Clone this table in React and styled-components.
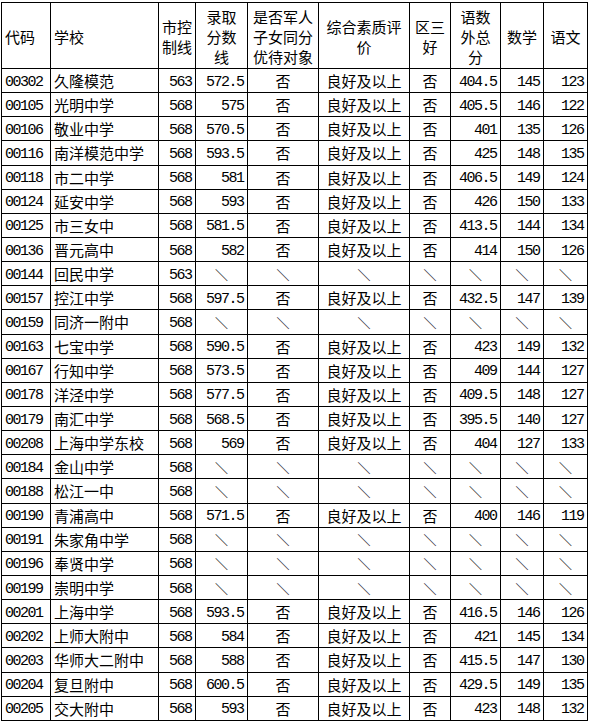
import React from 'react';
import styled, { createGlobalStyle } from 'styled-components';

const GlobalStyle = createGlobalStyle`
    html, body {
        margin: 0;
        padding: 0;
        background: #fff;
    }
`;

const Wrapper = styled.div`
    padding: 2px 0 0 1px;
`;

const Table = styled.table`
    width: 586px;
    border-collapse: collapse;
    table-layout: fixed;
    font-family: "Noto Sans CJK SC", "Noto Sans", sans-serif;
    font-size: 15px;
    color: #000;
`;

const HeadRow = styled.tr`
    height: 66px;
`;

const Row = styled.tr`
    height: 24.15px;
`;

const HeadCell = styled.th`
    border: 1px solid #000;
    padding: 2px 3px 0;
    font-weight: normal;
    line-height: 20px;
    vertical-align: middle;
    text-align: ${(p) => p.$align || 'center'};
    white-space: nowrap;
`;

const Cell = styled.td`
    border: 1px solid #000;
    padding: 1px ${(p) => (p.$align === 'right' ? '2px' : '3px')} 0;
    line-height: 16px;
    vertical-align: middle;
    text-align: ${(p) => p.$align || 'center'};
    white-space: nowrap;
    overflow: hidden;
`;

const Num = styled.span`
    font-family: "Liberation Mono", "DejaVu Sans Mono", monospace;
    font-size: 15px;
    line-height: 16px;
    letter-spacing: -1.5px;
    margin-right: 1.5px;
`;

const Slash = styled.span`
    font-size: 13px;
    line-height: 16px;
    color: #222;
`;

const widths = [49, 108, 37, 52, 71, 91, 41, 50, 43, 44];

const rows = [
    ['00302', '久隆模范', '563', '572.5', '否', '良好及以上', '否', '404.5', '145', '123'],
    ['00105', '光明中学', '568', '575', '否', '良好及以上', '否', '405.5', '146', '122'],
    ['00106', '敬业中学', '568', '570.5', '否', '良好及以上', '否', '401', '135', '126'],
    ['00116', '南洋模范中学', '568', '593.5', '否', '良好及以上', '否', '425', '148', '135'],
    ['00118', '市二中学', '568', '581', '否', '良好及以上', '否', '406.5', '149', '124'],
    ['00124', '延安中学', '568', '593', '否', '良好及以上', '否', '426', '150', '133'],
    ['00125', '市三女中', '568', '581.5', '否', '良好及以上', '否', '413.5', '144', '134'],
    ['00136', '晋元高中', '568', '582', '否', '良好及以上', '否', '414', '150', '126'],
    ['00144', '回民中学', '563'],
    ['00157', '控江中学', '568', '597.5', '否', '良好及以上', '否', '432.5', '147', '139'],
    ['00159', '同济一附中', '568'],
    ['00163', '七宝中学', '568', '590.5', '否', '良好及以上', '否', '423', '149', '132'],
    ['00167', '行知中学', '568', '573.5', '否', '良好及以上', '否', '409', '144', '127'],
    ['00178', '洋泾中学', '568', '577.5', '否', '良好及以上', '否', '409.5', '148', '127'],
    ['00179', '南汇中学', '568', '568.5', '否', '良好及以上', '否', '395.5', '140', '127'],
    ['00208', '上海中学东校', '568', '569', '否', '良好及以上', '否', '404', '127', '133'],
    ['00184', '金山中学', '568'],
    ['00188', '松江一中', '568'],
    ['00190', '青浦高中', '568', '571.5', '否', '良好及以上', '否', '400', '146', '119'],
    ['00191', '朱家角中学', '568'],
    ['00196', '奉贤中学', '568'],
    ['00199', '崇明中学', '568'],
    ['00201', '上海中学', '568', '593.5', '否', '良好及以上', '否', '416.5', '146', '126'],
    ['00202', '上师大附中', '568', '584', '否', '良好及以上', '否', '421', '145', '134'],
    ['00203', '华师大二附中', '568', '588', '否', '良好及以上', '否', '415.5', '147', '130'],
    ['00204', '复旦附中', '568', '600.5', '否', '良好及以上', '否', '429.5', '149', '135'],
    ['00205', '交大附中', '568', '593', '否', '良好及以上', '否', '423', '148', '132'],
];

// 每列对齐方式
const aligns = ['left', 'left', 'right', 'right', 'center', 'center', 'center', 'right', 'right', 'right'];
const numeric = [true, false, true, true, false, false, false, true, true, true];

const headers = [
    { align: 'left', lines: ['代码'] },
    { align: 'left', lines: ['学校'] },
    { lines: ['市控', '制线'] },
    { lines: ['录取', '分数', '线'] },
    { lines: ['是否军人', '子女同分', '优待对象'] },
    { lines: ['综合素质评', '价'] },
    { lines: ['区三', '好'] },
    { lines: ['语数', '外总', '分'] },
    { lines: ['数学'] },
    { lines: ['语文'] },
];

const App = () => {
    return (
        <Wrapper>
            <GlobalStyle />
            <Table>
                <colgroup>
                    {widths.map((w, i) => (
                        <col key={i} style={{ width: w }} />
                    ))}
                </colgroup>
                <thead>
                    <HeadRow>
                        {headers.map((h, i) => (
                            <HeadCell key={i} $align={h.align}>
                                {h.lines.map((l, j) => (
                                    <React.Fragment key={j}>
                                        {j > 0 && <br />}
                                        {l}
                                    </React.Fragment>
                                ))}
                            </HeadCell>
                        ))}
                    </HeadRow>
                </thead>
                <tbody>
                    {rows.map((r) => (
                        <Row key={r[0]}>
                            {widths.map((_, i) => {
                                const value = r[i];
                                if (value === undefined) {
                                    return (
                                        <Cell key={i} $align="center">
                                            <Slash>＼</Slash>
                                        </Cell>
                                    );
                                }
                                return (
                                    <Cell key={i} $align={aligns[i]}>
                                        {numeric[i] ? <Num>{value}</Num> : value}
                                    </Cell>
                                );
                            })}
                        </Row>
                    ))}
                </tbody>
            </Table>
        </Wrapper>
    );
};

export default App;
